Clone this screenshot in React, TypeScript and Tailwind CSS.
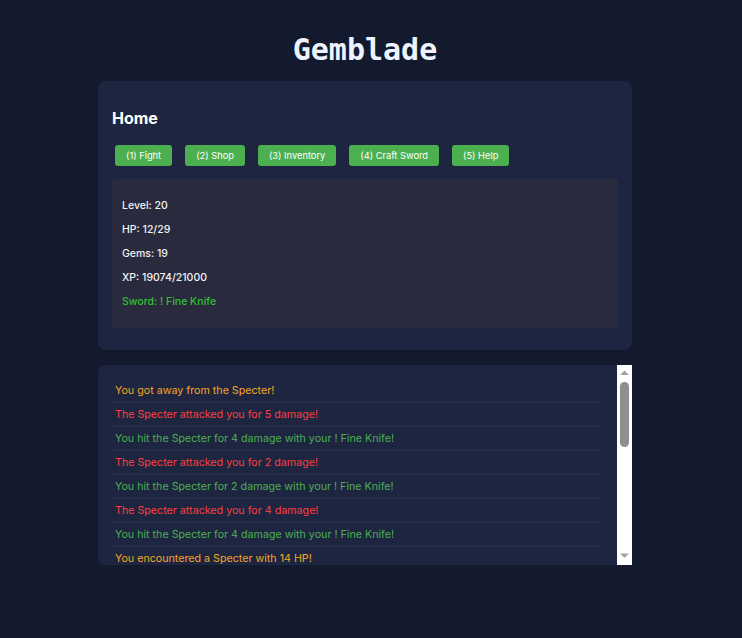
import React from 'react';

type LogEntry = {
    text: string;
    kind: 'info' | 'damage' | 'hit';
};

const buttons = ['(1) Fight', '(2) Shop', '(3) Inventory', '(4) Craft Sword', '(5) Help'];

const log: LogEntry[] = [
    { text: 'You got away from the Specter!', kind: 'info' },
    { text: 'The Specter attacked you for 5 damage!', kind: 'damage' },
    { text: 'You hit the Specter for 4 damage with your ! Fine Knife!', kind: 'hit' },
    { text: 'The Specter attacked you for 2 damage!', kind: 'damage' },
    { text: 'You hit the Specter for 2 damage with your ! Fine Knife!', kind: 'hit' },
    { text: 'The Specter attacked you for 4 damage!', kind: 'damage' },
    { text: 'You hit the Specter for 4 damage with your ! Fine Knife!', kind: 'hit' },
    { text: 'You encountered a Specter with 14 HP!', kind: 'info' },
];

const kindClass: Record<LogEntry['kind'], string> = {
    info: 'text-[#f5a623]',
    damage: 'text-[#ff3d3d]',
    hit: 'text-[#4caf50]',
};

const ScrollArrow: React.FC<{ down?: boolean }> = ({ down }) => (
    <svg width="15" height="15" viewBox="0 0 15 15" className="block shrink-0">
        {down ? (
            <polygon points="3,3.5 12,3.5 7.5,8" fill="#a3a3a3" />
        ) : (
            <polygon points="3,10 12,10 7.5,5.5" fill="#a3a3a3" />
        )}
    </svg>
);

const App: React.FC = () => {
    return (
        <div className="min-h-[638px] bg-[#141a2e] pt-[32px] pb-[40px] font-['Inter','Noto_Sans',sans-serif]">
            <div className="w-[730px]">
                <h1 className="text-center text-[30px] leading-[36px] font-bold text-[#eef4ff] font-['DejaVu_Sans_Mono',monospace] mb-[13px]">
                    Gemblade
                </h1>

                <div className="w-[534px] mx-auto">
                    <div className="bg-[#1e2541] rounded-lg px-[14px] pt-[14px] pb-[22px]">
                        <h2 className="mt-[13px] text-[16px] leading-[20px] font-bold text-white">Home</h2>
                        <div className="flex gap-[13px] ml-[3px] mt-[17px]">
                            {buttons.map((label) => (
                                <button
                                    key={label}
                                    type="button"
                                    className="h-[21px] px-[11px] rounded-[3px] bg-[#4caf50] text-white text-[9.3px] leading-[21px]"
                                >
                                    {label}
                                </button>
                            ))}
                        </div>
                        <div className="mt-[13px] bg-[#2a2a3f] rounded px-[10px] pt-[10px] pb-[9px] text-[10.5px] leading-[14px] text-[#f2f2f2] font-medium">
                            <p className="my-[10px]">Level: 20</p>
                            <p className="my-[10px]">HP: 12/29</p>
                            <p className="my-[10px]">Gems: 19</p>
                            <p className="my-[10px]">XP: 19074/21000</p>
                            <p className="my-[10px] text-[#32c032]">Sword: ! Fine Knife</p>
                        </div>
                    </div>

                    <div className="mt-[15px] h-[200px] flex bg-[#1e2541] rounded-l-lg overflow-hidden">
                        <div className="flex-1 min-w-0 overflow-hidden p-[14px]">
                            {log.map((entry, i) => (
                                <div
                                    key={i}
                                    className={`px-[3px] py-[5px] text-[10.7px] leading-[13px] border-b border-[#283050] whitespace-nowrap ${kindClass[entry.kind]}`}
                                >
                                    {entry.text}
                                </div>
                            ))}
                        </div>
                        <div className="w-[15px] shrink-0 bg-white flex flex-col items-center">
                            <ScrollArrow />
                            <div className="mt-[2px] w-[9px] h-[65px] rounded-full bg-[#8f8f8f]" />
                            <div className="flex-1" />
                            <ScrollArrow down />
                        </div>
                    </div>
                </div>
            </div>
        </div>
    );
};

export default App;
